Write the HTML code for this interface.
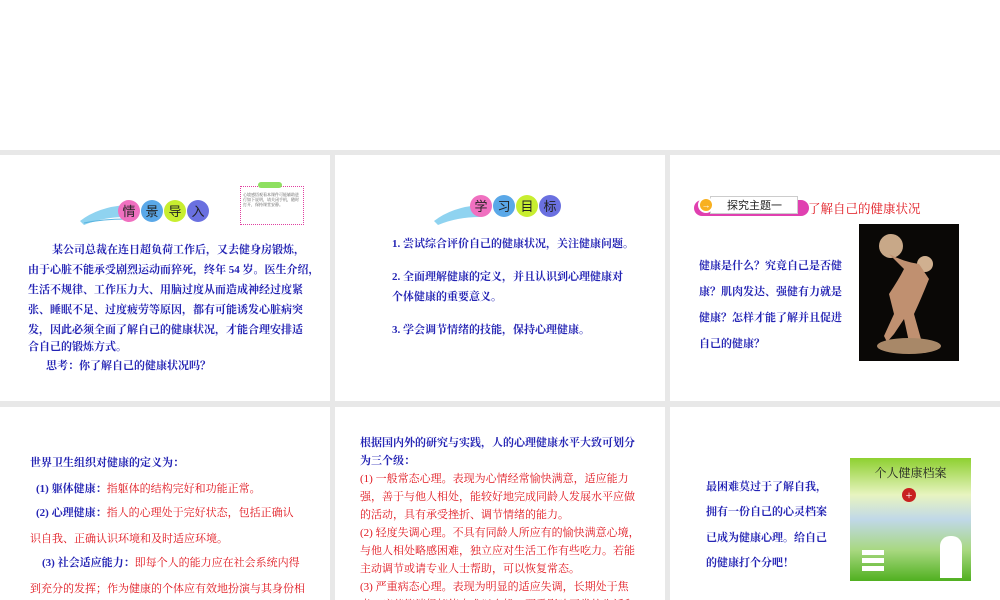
<!DOCTYPE html>
<html><head><meta charset="utf-8"><style>
*{margin:0;padding:0;box-sizing:border-box}
body{width:1000px;height:600px;background:#fff;position:relative;overflow:hidden;font-family:"Liberation Serif","Noto Serif CJK SC","Noto Sans CJK SC",serif}
.band{position:absolute;left:0;top:150px;width:1000px;height:450px;background:#e8e8e8}
.p{position:absolute;background:#fff;overflow:hidden}
.t{position:absolute;font-size:11px;white-space:nowrap;color:#2424b4;font-weight:bold}
.r{color:#e0141c;font-weight:normal}
.ball{position:absolute;width:22px;height:22px;border-radius:50%;font-size:13px;text-align:center;line-height:22px;color:#222;font-family:"Noto Sans CJK SC",sans-serif}
</style></head><body>
<div class="band"></div>
<!-- panel 1 -->
<div class="p" style="left:0;top:155px;width:330px;height:246px">
 <svg style="position:absolute;left:78px;top:42px" width="50" height="30"><path d="M2 24 Q20 10 48 8 L48 20 Q25 20 6 28Z" fill="#8fd3f0"/><path d="M6 26 Q25 22 48 22" stroke="#5ab5e0" fill="none"/></svg>
 <div class="ball" style="left:118px;top:45px;background:#f070c0">情</div>
 <div class="ball" style="left:141px;top:45px;background:#5aa8e8">景</div>
 <div class="ball" style="left:164px;top:45px;background:#c8ee30">导</div>
 <div class="ball" style="left:187px;top:45px;background:#6a70e0">入</div>
 <div style="position:absolute;left:240px;top:31px;width:64px;height:39px;border:1px dotted #e040a0;font-size:4px;color:#555;padding:5px 2px;line-height:5px">心境感悟观看本课件可能辅助进行如下说明，请关闭手机，随时打开，保持课堂安静。</div>
 <div style="position:absolute;left:258px;top:27px;width:24px;height:6px;background:#8ee060;border-radius:3px"></div>
 <div class="t" style="left:52px;top:86px">某公司总裁在连日超负荷工作后，又去健身房锻炼，</div>
 <div class="t" style="left:28px;top:106px">由于心脏不能承受剧烈运动而猝死，终年 54 岁。医生介绍，</div>
 <div class="t" style="left:28px;top:126px">生活不规律、工作压力大、用脑过度从而造成神经过度紧</div>
 <div class="t" style="left:28px;top:146px">张、睡眠不足、过度疲劳等原因，都有可能诱发心脏病突</div>
 <div class="t" style="left:28px;top:166px">发，因此必须全面了解自己的健康状况，才能合理安排适</div>
 <div class="t" style="left:28px;top:183px">合自己的锻炼方式。</div>
 <div class="t" style="left:46px;top:202px">思考：你了解自己的健康状况吗？</div>
</div>
<!-- panel 2 -->
<div class="p" style="left:335px;top:155px;width:330px;height:246px">
 <svg style="position:absolute;left:97px;top:42px" width="50" height="30"><path d="M2 24 Q20 10 48 8 L48 20 Q25 20 6 28Z" fill="#8fd3f0"/></svg>
 <div class="ball" style="left:135px;top:40px;background:#f070c0">学</div>
 <div class="ball" style="left:158px;top:40px;background:#5aa8e8">习</div>
 <div class="ball" style="left:181px;top:40px;background:#c8ee30">目</div>
 <div class="ball" style="left:204px;top:40px;background:#6a70e0">标</div>
 <div class="t" style="left:57px;top:80px">1. 尝试综合评价自己的健康状况，关注健康问题。</div>
 <div class="t" style="left:57px;top:113px">2. 全面理解健康的定义，并且认识到心理健康对</div>
 <div class="t" style="left:57px;top:133px">个体健康的重要意义。</div>
 <div class="t" style="left:57px;top:166px">3. 学会调节情绪的技能，保持心理健康。</div>
</div>
<!-- panel 3 -->
<div class="p" style="left:670px;top:155px;width:330px;height:246px">
 <div style="position:absolute;left:24px;top:45px;width:115px;height:16px;background:#e040b0;border-radius:8px"></div>
 <div style="position:absolute;left:40px;top:41px;width:88px;height:18px;background:#fff;border:1px solid #ccc;font-size:11px;line-height:16px;padding-left:16px;color:#222;font-family:'Noto Sans CJK SC',sans-serif">探究主题一</div>
 <div style="position:absolute;left:28px;top:42px;width:16px;height:16px;border-radius:50%;background:#f8b020;border:2px solid #fff;color:#fff;font-size:9px;line-height:12px;text-align:center">→</div>
 <div class="t" style="left:138px;top:44px;color:#e0141c;font-size:12.5px;font-weight:normal">了解自己的健康状况</div>
 <div style="position:absolute;left:189px;top:69px;width:100px;height:137px;background:#0a0806">
  <svg width="100" height="137"><circle cx="32" cy="22" r="12" fill="#c8a888"/><circle cx="66" cy="40" r="8" fill="#d0b090"/><path d="M30 30 Q45 38 60 40 L70 55 Q62 75 55 90 L62 115 L50 118 L45 95 L35 110 L28 118 L25 112 L35 90 L30 70 Q40 55 45 45 Z" fill="#c09070"/><ellipse cx="50" cy="122" rx="32" ry="8" fill="#a88868"/></svg>
 </div>
 <div class="t" style="left:29px;top:102px">健康是什么？究竟自己是否健</div>
 <div class="t" style="left:29px;top:128px">康？肌肉发达、强健有力就是</div>
 <div class="t" style="left:29px;top:154px">健康？怎样才能了解并且促进</div>
 <div class="t" style="left:29px;top:180px">自己的健康？</div>
</div>
<!-- panel 4 -->
<div class="p" style="left:0;top:407px;width:330px;height:193px">
 <div class="t" style="left:30px;top:47px">世界卫生组织对健康的定义为：</div>
 <div class="t" style="left:36px;top:73px">(1) 躯体健康：<span class="r">指躯体的结构完好和功能正常。</span></div>
 <div class="t" style="left:36px;top:97px">(2) 心理健康：<span class="r">指人的心理处于完好状态，包括正确认</span></div>
 <div class="t r" style="left:30px;top:123px">识自我、正确认识环境和及时适应环境。</div>
 <div class="t" style="left:42px;top:147px">(3) 社会适应能力：<span class="r">即每个人的能力应在社会系统内得</span></div>
 <div class="t r" style="left:30px;top:173px">到充分的发挥；作为健康的个体应有效地扮演与其身份相</div>
</div>
<!-- panel 5 -->
<div class="p" style="left:335px;top:407px;width:330px;height:193px">
 <div class="t" style="left:25px;top:27px">根据国内外的研究与实践，人的心理健康水平大致可划分</div>
 <div class="t" style="left:25px;top:45px">为三个级：</div>
 <div class="t r" style="left:25px;top:63px">(1) 一般常态心理。表现为心情经常愉快满意，适应能力</div>
 <div class="t r" style="left:25px;top:81px">强，善于与他人相处，能较好地完成同龄人发展水平应做</div>
 <div class="t r" style="left:25px;top:99px">的活动，具有承受挫折、调节情绪的能力。</div>
 <div class="t r" style="left:25px;top:117px">(2) 轻度失调心理。不具有同龄人所应有的愉快满意心境，</div>
 <div class="t r" style="left:25px;top:135px">与他人相处略感困难，独立应对生活工作有些吃力。若能</div>
 <div class="t r" style="left:25px;top:153px">主动调节或请专业人士帮助，可以恢复常态。</div>
 <div class="t r" style="left:25px;top:171px">(3) 严重病态心理。表现为明显的适应失调，长期处于焦</div>
 <div class="t r" style="left:25px;top:189px">虑、痛苦等消极情绪中难以自拔，严重影响正常的生活和</div>
</div>
<!-- panel 6 -->
<div class="p" style="left:670px;top:407px;width:330px;height:193px">
 <div class="t" style="left:36px;top:71px">最困难莫过于了解自我，</div>
 <div class="t" style="left:36px;top:96px">拥有一份自己的心灵档案</div>
 <div class="t" style="left:36px;top:122px">已成为健康心理。给自己</div>
 <div class="t" style="left:36px;top:147px">的健康打个分吧！</div>
 <div style="position:absolute;left:180px;top:51px;width:121px;height:123px;background:linear-gradient(#8ed030,#e8f4c0 30%,#c0d8e8 50%,#a8d880 75%,#50b020)">
  <div style="text-align:center;font-size:12px;color:#222;margin-top:6px">个人健康档案</div>
  <div style="position:absolute;left:52px;top:30px;width:14px;height:14px;border-radius:50%;background:#c82020;color:#fff;font-size:12px;line-height:14px;text-align:center">+</div>
  <div style="position:absolute;left:12px;top:92px;width:22px;height:5px;background:#fff"></div>
  <div style="position:absolute;left:12px;top:100px;width:22px;height:5px;background:#fff"></div>
  <div style="position:absolute;left:12px;top:108px;width:22px;height:5px;background:#fff"></div>
  <div style="position:absolute;left:90px;top:78px;width:22px;height:42px;background:#fff;border-radius:10px 10px 0 0"></div>
 </div>
</div>
</body></html>
